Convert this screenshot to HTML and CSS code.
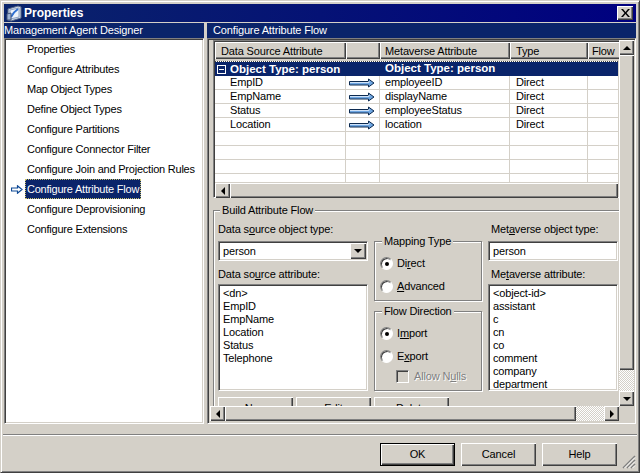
FILE: index.html
```html
<!DOCTYPE html>
<html lang="en">
<head>
<meta charset="utf-8">
<title>Properties</title>
<link rel="stylesheet" href="styles.css">
</head>
<body>
<div class="window">
  <div class="titlebar">
    <svg class="title-icon" width="16" height="17" viewBox="0 0 16 17">
      <path d="M2 4 L12 1 L15 2 L15 13 L5 16 L2 15 Z" fill="#c9d6e8" stroke="#5a6a88"/>
      <path d="M4 5 L13 3 L13 12 L4 14 Z" fill="#eef3fa" stroke="#8fa3c4"/>
      <path d="M5 12 C7 8 9 6 12 4" fill="none" stroke="#2f6fd0" stroke-width="2"/>
      <path d="M1 9 L5 8 L5 15 L1 15 Z" fill="#9fb4d4" stroke="#44567a"/>
    </svg>
    <span class="title-text">Properties</span>
    <div class="close-btn">
      <svg width="9" height="8" viewBox="0 0 9 8"><path d="M0 0h2l2.500 3 2.500-3h2L5.500 4 9 8H7L4.500 5 2 8H0l3.500-4z" fill="#000"/></svg>
    </div>
  </div>
  <div class="main">
    <div class="left">
      <div class="pane-head">Management Agent Designer</div>
      <ul class="tree sunken">
        <li class="tree-item"><span class="tree-label">Properties</span></li>
        <li class="tree-item"><span class="tree-label">Configure Attributes</span></li>
        <li class="tree-item"><span class="tree-label">Map Object Types</span></li>
        <li class="tree-item"><span class="tree-label">Define Object Types</span></li>
        <li class="tree-item"><span class="tree-label">Configure Partitions</span></li>
        <li class="tree-item"><span class="tree-label">Configure Connector Filter</span></li>
        <li class="tree-item"><span class="tree-label">Configure Join and Projection Rules</span></li>
        <li class="tree-item current">
          <svg class="tree-arrow" width="12" height="9" viewBox="0 0 12 9"><path d="M0.500 3 H6.500 V0.800 L11 4.500 6.500 8.200 V6 H0.500 Z" fill="#fff" stroke="#0f4a96" stroke-width="1.200"/></svg>
          <span class="tree-label selected">Configure Attribute Flow</span>
        </li>
        <li class="tree-item"><span class="tree-label">Configure Deprovisioning</span></li>
        <li class="tree-item"><span class="tree-label">Configure Extensions</span></li>
      </ul>
    </div>
    <div class="right">
      <div class="pane-head pane-head-right">Configure Attribute Flow</div>
      <div class="panel sunken">
        <div class="viewport">
          <div class="table-box">
            <div class="cols head-row">
              <div class="head-cell">Data Source Attribute</div>
              <div class="head-cell"></div>
              <div class="head-cell head-meta">Metaverse Attribute</div>
              <div class="head-cell">Type</div>
              <div class="head-cell head-flow">Flow</div>
            </div>
            <div class="rows">
              <div class="cols row row-selected">
                <div class="cell cell-first"><span class="minus"></span>Object Type: person</div>
                <div class="cell"></div>
                <div class="cell cell-meta">Object Type: person</div>
                <div class="cell"></div>
                <div class="cell"></div>
              </div>
              <div class="cols row">
                <div class="cell cell-indent">EmpID</div>
                <div class="cell cell-arrow"><svg width="26" height="10" viewBox="0 0 26 10"><path d="M0.500 3.500 H19.500 V1 L25 5 19.500 9 V7 H0.500 Z" fill="#6ea6e2" stroke="#0c2a50"/><path d="M1 4.500 H20 V3" fill="none" stroke="#cfe2f8"/></svg></div>
                <div class="cell cell-meta">employeeID</div>
                <div class="cell">Direct</div>
                <div class="cell"></div>
              </div>
              <div class="cols row">
                <div class="cell cell-indent">EmpName</div>
                <div class="cell cell-arrow"><svg width="26" height="10" viewBox="0 0 26 10"><path d="M0.500 3.500 H19.500 V1 L25 5 19.500 9 V7 H0.500 Z" fill="#6ea6e2" stroke="#0c2a50"/><path d="M1 4.500 H20 V3" fill="none" stroke="#cfe2f8"/></svg></div>
                <div class="cell cell-meta">displayName</div>
                <div class="cell">Direct</div>
                <div class="cell"></div>
              </div>
              <div class="cols row">
                <div class="cell cell-indent">Status</div>
                <div class="cell cell-arrow"><svg width="26" height="10" viewBox="0 0 26 10"><path d="M0.500 3.500 H19.500 V1 L25 5 19.500 9 V7 H0.500 Z" fill="#6ea6e2" stroke="#0c2a50"/><path d="M1 4.500 H20 V3" fill="none" stroke="#cfe2f8"/></svg></div>
                <div class="cell cell-meta">employeeStatus</div>
                <div class="cell">Direct</div>
                <div class="cell"></div>
              </div>
              <div class="cols row">
                <div class="cell cell-indent">Location</div>
                <div class="cell cell-arrow"><svg width="26" height="10" viewBox="0 0 26 10"><path d="M0.500 3.500 H19.500 V1 L25 5 19.500 9 V7 H0.500 Z" fill="#6ea6e2" stroke="#0c2a50"/><path d="M1 4.500 H20 V3" fill="none" stroke="#cfe2f8"/></svg></div>
                <div class="cell cell-meta">location</div>
                <div class="cell">Direct</div>
                <div class="cell"></div>
              </div>
              <div class="cols row"><div class="cell"></div><div class="cell"></div><div class="cell"></div><div class="cell"></div><div class="cell"></div></div>
              <div class="cols row"><div class="cell"></div><div class="cell"></div><div class="cell"></div><div class="cell"></div><div class="cell"></div></div>
              <div class="cols row"><div class="cell"></div><div class="cell"></div><div class="cell"></div><div class="cell"></div><div class="cell"></div></div>
              <div class="cols row row-partial"><div class="cell"></div><div class="cell"></div><div class="cell"></div><div class="cell"></div><div class="cell"></div></div>
            </div>
            <div class="hscroll hscroll-table">
              <div class="sb-btn"><span class="tri tri-left"></span></div>
              <div class="sb-thumb"></div>
            </div>
          </div>
          <div class="group build">
            <div class="legend">Build Attribute Flow</div>
            <div class="build-grid">
              <div class="build-col">
                <label class="lbl">Data s<u>o</u>urce object type:</label>
                <div class="field combo">
                  <span class="field-text">person</span>
                  <div class="sb-btn combo-btn"><span class="tri tri-down"></span></div>
                </div>
                <label class="lbl lbl-gap">Data so<u>u</u>rce attribute:</label>
                <div class="field list">
                  <div>&lt;dn&gt;</div><div>EmpID</div><div>EmpName</div><div>Location</div><div>Status</div><div>Telephone</div>
                </div>
              </div>
              <div class="build-col build-mid">
                <div class="group mapping">
                  <div class="legend">Mapping Type</div>
                  <div class="opt opt-first"><span class="radio checked"></span><span>Di<u>r</u>ect</span></div>
                  <div class="opt"><span class="radio"></span><span><u>A</u>dvanced</span></div>
                </div>
                <div class="group direction">
                  <div class="legend">Flow Direction</div>
                  <div class="opt opt-first"><span class="radio checked"></span><span>I<u>m</u>port</span></div>
                  <div class="opt"><span class="radio"></span><span>E<u>x</u>port</span></div>
                  <div class="check-row"><span class="check"></span><span class="disabled">Allow N<u>u</u>lls</span></div>
                </div>
              </div>
              <div class="build-col">
                <label class="lbl lbl-inset">Met<u>a</u>verse object type:</label>
                <div class="field textbox"><span class="field-text">person</span></div>
                <label class="lbl lbl-gap lbl-inset">Me<u>t</u>averse attribute:</label>
                <div class="field list">
                  <div>&lt;object-id&gt;</div><div>assistant</div><div>c</div><div>cn</div><div>co</div><div>comment</div><div>company</div><div>department</div>
                </div>
              </div>
              <div class="action-row">
                <div class="btn action">New</div>
                <div class="btn action">Edit</div>
                <div class="btn action">Delete</div>
              </div>
            </div>
          </div>
        </div>
        <div class="vscroll">
          <div class="sb-btn"><span class="tri tri-up"></span></div>
          <div class="sb-thumb"></div>
          <div class="sb-track"></div>
          <div class="sb-btn"><span class="tri tri-down"></span></div>
        </div>
        <div class="hscroll hscroll-main">
          <div class="sb-btn"><span class="tri tri-left"></span></div>
          <div class="sb-thumb"></div>
          <div class="sb-track"></div>
          <div class="sb-btn"><span class="tri tri-right"></span></div>
        </div>
        <div class="corner"></div>
      </div>
    </div>
  </div>
  <div class="separator"></div>
  <div class="footer">
    <div class="btn btn-default">OK</div>
    <div class="btn">Cancel</div>
    <div class="btn">Help</div>
    <svg class="grip" width="14" height="14" viewBox="0 0 14 14"><path d="M13 1 L1 13 M13 5 L5 13 M13 9 L9 13" stroke="#808080" stroke-width="1.500" fill="none"/><path d="M13 2.500 L2.500 13 M13 6.500 L6.500 13 M13 10.500 L10.500 13" stroke="#fff" stroke-width="1" fill="none"/></svg>
  </div>
</div>
</body>
</html>
```
FILE: styles.css
```css
* { box-sizing: border-box; }
html, body { margin: 0; padding: 0; background: #d4d0c8; }
body { width: 640px; height: 473px; overflow: hidden; font: 11px/13px "Liberation Sans", Arial, sans-serif; letter-spacing: -0.15px; color: #000; }
u { text-decoration-thickness: 1px; text-underline-offset: 1px; }

.window {
  width: 640px; height: 473px;
  background: #d4d0c8;
  border: 1px solid; border-color: #d4d0c8 #404040 #404040 #d4d0c8;
  box-shadow: inset 1px 1px #fff, inset -1px -1px #808080;
  padding: 3px;
  display: flex; flex-direction: column;
}
.titlebar {
  height: 18px; flex: none;
  background: linear-gradient(90deg, #0a246a, #000080);
  color: #fff; font-weight: bold; font-size: 12px; letter-spacing: 0;
  display: flex; align-items: center; padding: 0 3px 0 2px;
}
.title-icon { flex: none; margin-right: 2px; }
.title-text { flex: 1; }
.close-btn {
  width: 16px; height: 14px;
  background: #d4d0c8;
  box-shadow: inset 1px 1px #fff, inset -1px -1px #404040, inset -2px -2px #808080;
  display: flex; align-items: center; justify-content: center;
}

.main { flex: none; height: 401px; margin-top: 1px; display: flex; gap: 3px; }
.left { width: 200px; flex: none; display: flex; flex-direction: column; }
.right { flex: 1; min-width: 0; display: flex; flex-direction: column; }
.pane-head {
  height: 15px; flex: none; background: #0a246a; color: #fff;
  line-height: 14px; white-space: nowrap; overflow: hidden;
}
.pane-head-right { padding-left: 6px; }
.sunken {
  border: 1px solid; border-color: #808080 #fff #fff #808080;
  box-shadow: inset 1px 1px #404040, inset -1px -1px #d4d0c8;
}
.tree { flex: 1; margin: 0; padding: 0; list-style: none; background: #fff; letter-spacing: -0.22px; }
.tree-item { height: 20px; display: flex; align-items: center; padding-left: 20px; position: relative; }
.tree-label { padding: 0 2px; line-height: 20px; white-space: nowrap; }
.tree-label.selected { background: #0a246a; color: #fff; outline: 1px dotted #c9c26a; outline-offset: -1px; }
.tree-arrow { position: absolute; left: 6px; top: 6px; }

.panel {
  flex: 1; min-height: 0; background: #d4d0c8; padding: 1px;
  display: grid; grid-template-columns: 410px 15px; grid-template-rows: 366px 16px;
}
.viewport { overflow: hidden; padding-left: 4px; }
.table-box {
  width: 420px; height: 158px;
  border: 1px solid; border-color: #808080 #fff #fff #808080;
  border-right: none;
  box-shadow: inset 1px 0 #404040, inset 0 1px #404040;
  padding: 1px 0 0 1px;
}
.cols { display: grid; grid-template-columns: 131px 34px 130px 78px 46px; }
.head-row { height: 17px; }
.head-cell {
  background: #d4d0c8; padding: 3px 0 0 6px; white-space: nowrap; overflow: hidden;
  box-shadow: inset 1px 1px #fff, inset -1px -1px #404040, inset -2px -2px #808080;
}
.head-cell:nth-child(2) { padding: 0; }
.head-meta { padding-left: 5px; }
.head-flow { padding-left: 4px; }
.rows { margin-top: 2px; height: 122px; background: #fff; width: 403px; overflow: hidden; border-top: 1px dotted #444; }
.row { height: 14px; border-bottom: 1px solid #d4d0c8; width: 419px; }
.row-partial { height: 9px; }
.row-selected { background: #0a246a; color: #fff; font-weight: bold; font-size: 11.500px; letter-spacing: 0; border-bottom: 0; }
.cell { border-right: 1px solid #d4d0c8; padding-left: 6px; line-height: 13px; white-space: nowrap; overflow: hidden; }
.row-selected .cell { overflow: visible; border-right-color: #0a246a; }
.cell-first { padding-left: 2px; display: flex; align-items: center; }
.cell-meta { padding-left: 5px; }
.cell-indent { padding-left: 15px; }
.cell-arrow { padding-left: 3px; display: flex; align-items: center; }
.minus {
  width: 9px; height: 9px; border: 1px solid #fff; margin-right: 4px; flex: none;
  background: linear-gradient(#fff, #fff) center / 5px 1px no-repeat;
}
.sb-btn {
  flex: none; width: 15px; height: 15px; background: #d4d0c8;
  box-shadow: inset 1px 1px #fff, inset -1px -1px #404040, inset -2px -2px #808080;
  display: flex; align-items: center; justify-content: center;
}
.sb-thumb {
  flex: 1; background: #d4d0c8;
  box-shadow: inset 1px 1px #fff, inset -1px -1px #404040, inset -2px -2px #808080;
}
.sb-track {
  flex: none;
  background: repeating-conic-gradient(#d4d0c8 0 25%, #fff 0 50%) 0 0 / 2px 2px;
}
.tri { width: 0; height: 0; border: 4px solid transparent; display: block; }
.tri-up { border-top: 0; border-bottom-color: #000; }
.tri-down { border-bottom: 0; border-top-color: #000; }
.tri-left { border-left: 0; border-right-color: #000; }
.tri-right { border-right: 0; border-left-color: #000; }
.hscroll { display: flex; height: 15px; }
.hscroll-table { width: 403px; }
.hscroll-main { grid-column: 1; padding-left: 1px; }
.hscroll-main .sb-track { width: 28px; }
.vscroll { display: flex; flex-direction: column; grid-row: 1; grid-column: 2; }
.vscroll .sb-track { height: 21px; }
.corner { grid-row: 2; grid-column: 2; }

.group {
  position: relative;
  border: 1px solid #808080;
  box-shadow: inset 1px 1px #fff, 1px 1px #fff;
}
.legend { position: absolute; left: 7px; top: -7px; padding: 0 2px; background: #d4d0c8; white-space: nowrap; }
.build > .legend { left: 6px; }
.build { margin-top: 12px; width: 430px; height: 200px; border-bottom: none; }
.build-grid {
  display: grid; grid-template-columns: 150px 108px 130px; column-gap: 6px;
  grid-template-rows: 175px auto; padding: 11px 0 0 4px;
}
.build-col { display: flex; flex-direction: column; }
.lbl { display: block; height: 19px; line-height: 14px; white-space: nowrap; }
.lbl-gap { margin-top: 6px; height: 17px; }
.lbl-inset { padding-left: 3px; }
.field {
  background: #fff;
  border: 1px solid; border-color: #808080 #fff #fff #808080;
  box-shadow: inset 1px 1px #404040, inset -1px -1px #d4d0c8;
}
.combo, .textbox { height: 20px; flex: none; display: flex; align-items: center; justify-content: space-between; padding: 0 1px 0 4px; }
.field-text { flex: 1; }
.combo-btn { height: 16px; width: 16px; }
.list { height: 107px; flex: none; padding: 2px 0 0 4px; overflow: hidden; }
.build-mid { padding-top: 19px; }
.mapping { height: 60px; flex: none; padding: 6px 0 0 5px; }
.direction { height: 80px; flex: none; margin-top: 10px; padding: 6px 0 0 5px; }
.opt { display: flex; align-items: center; gap: 4px; height: 13px; margin-top: 10px; white-space: nowrap; }
.opt-first { margin-top: 9px; }
.radio {
  width: 13px; height: 13px; border-radius: 50%; background: #fff; flex: none;
  border: 1px solid; border-color: #808080 #fff #fff #808080;
  box-shadow: inset 1px 1px #404040;
  display: flex; align-items: center; justify-content: center;
}
.radio.checked::after { content: ""; width: 4px; height: 4px; border-radius: 50%; background: #000; }
.check-row { display: flex; align-items: center; gap: 5px; padding-left: 16px; margin-top: 7px; white-space: nowrap; }
.check {
  width: 13px; height: 13px; flex: none;
  border: 1px solid; border-color: #808080 #fff #fff #808080;
  box-shadow: inset 1px 1px #404040;
}
.disabled { color: #808080; text-shadow: 1px 1px #fff; }
.action-row { grid-column: 1 / -1; display: flex; gap: 3px; }

.separator { flex: none; height: 2px; margin: 10px -1px 0; border-top: 1px solid #808080; border-bottom: 1px solid #fff; }
.footer { flex: 1; position: relative; display: flex; justify-content: flex-end; gap: 6px; padding: 7px 19px 0 0; }
.btn {
  width: 75px; height: 23px; background: #d4d0c8; text-align: center; line-height: 22px;
  box-shadow: inset 1px 1px #fff, inset -1px -1px #404040, inset -2px -2px #808080;
}
.btn-default { border: 1px solid #000; line-height: 20px; }
.grip { position: absolute; right: 0; bottom: 0; }
```
